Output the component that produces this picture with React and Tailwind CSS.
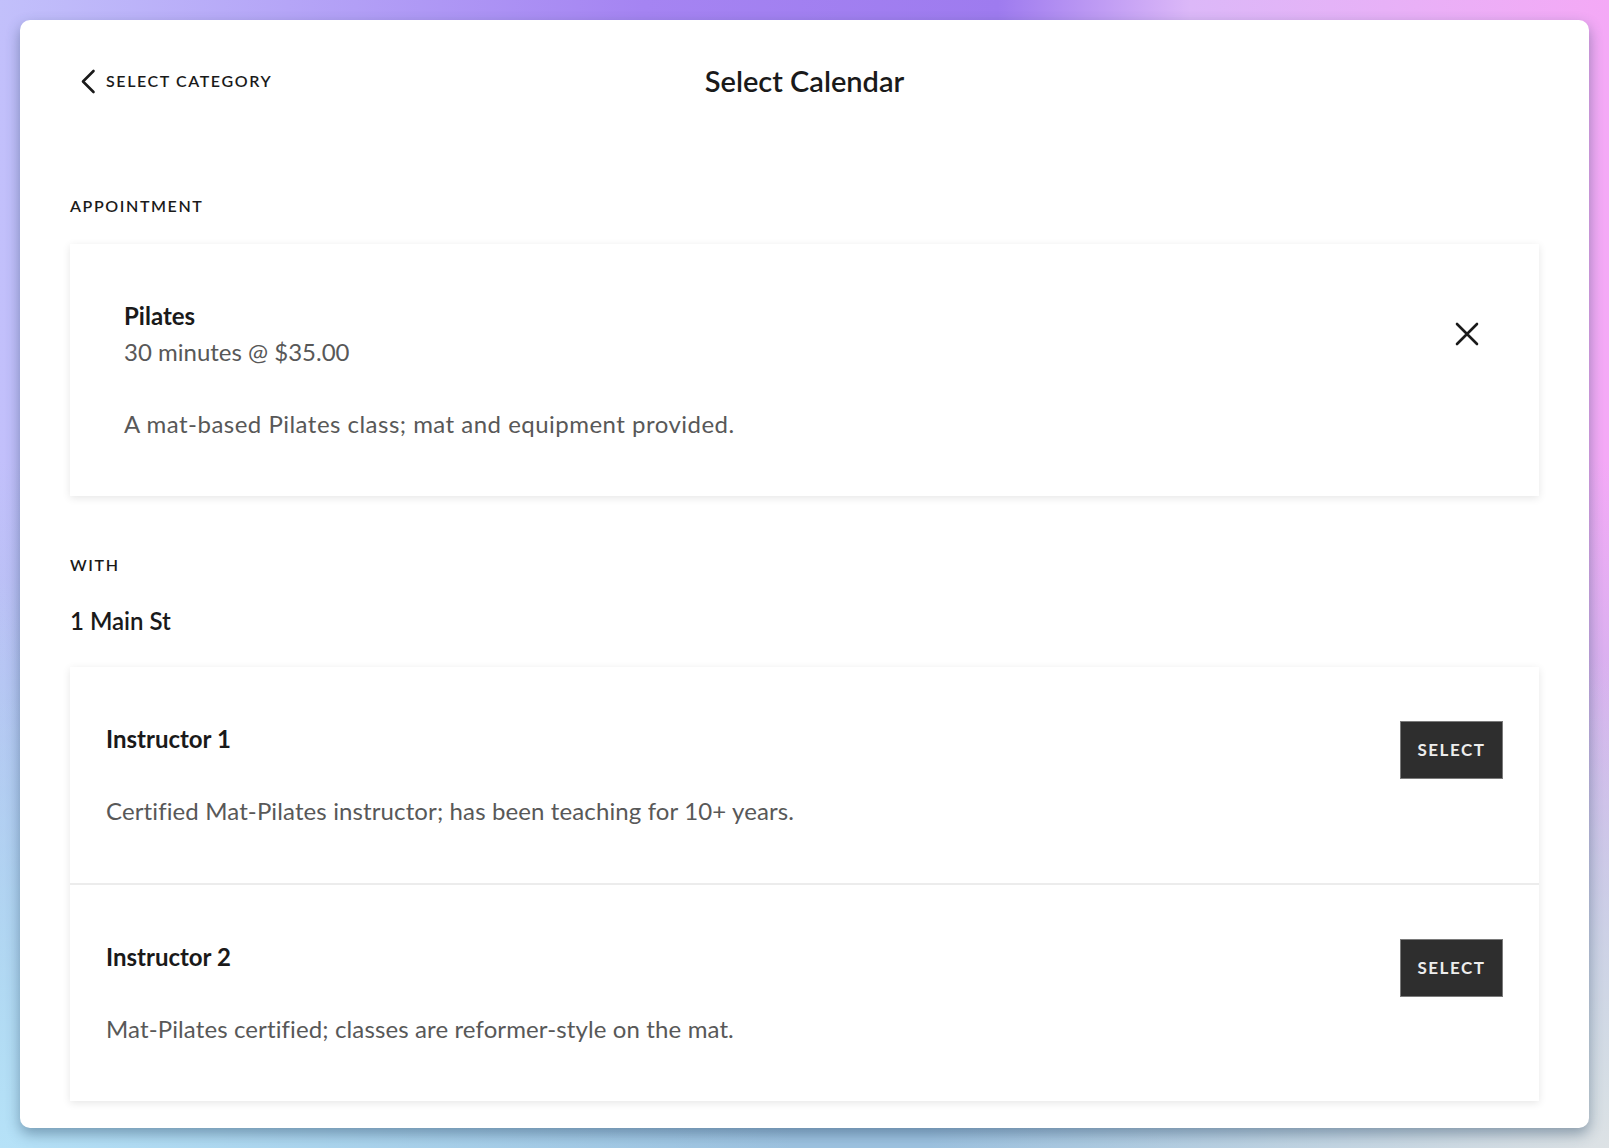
const instructors = [
  {
    name: 'Instructor 1',
    description: 'Certified Mat-Pilates instructor; has been teaching for 10+ years.',
  },
  {
    name: 'Instructor 2',
    description: 'Mat-Pilates certified; classes are reformer-style on the mat.',
  },
];

function ChevronLeft() {
  return (
    <svg width="16" height="25" viewBox="0 0 16 25" fill="none">
      <polyline
        points="13.5,2 3,12.5 13.5,23"
        stroke="#1a1a1a"
        strokeWidth="2.6"
        strokeLinecap="round"
        strokeLinejoin="round"
      />
    </svg>
  );
}

function CloseIcon() {
  return (
    <svg width="24" height="24" viewBox="0 0 24 24" fill="none">
      <path d="M2 2 L22 22 M22 2 L2 22" stroke="#1a1a1a" strokeWidth="2.6" strokeLinecap="round" />
    </svg>
  );
}

function InstructorRow({ instructor, last }) {
  return (
    <div
      className={
        last
          ? 'flex items-start justify-between px-[36px] py-[54px]'
          : 'flex items-start justify-between px-[36px] py-[54px] border-b-2 border-[#ececec]'
      }
    >
      <div>
        <h3 className="text-[24px] leading-[36px] font-bold text-[#1a1a1a]">{instructor.name}</h3>
        <p className="mt-[36px] text-[24px] leading-[36px] tracking-[0.005em] text-[#585858]">
          {instructor.description}
        </p>
      </div>
      <button className="h-[58px] w-[103px] bg-[#2e2e2e] border border-[#7a7a7a] text-[#ededed] text-[17px] font-bold tracking-[0.09em]">
        SELECT
      </button>
    </div>
  );
}

export default function App() {
  return (
    <div
      className="min-h-screen p-[20px] font-['Lato','Liberation_Sans',sans-serif] bg-[radial-gradient(ellipse_at_100%_100%,#dde2e5_0%,transparent_30%),radial-gradient(ellipse_at_0%_100%,#b6e2f8_0%,transparent_35%),linear-gradient(180deg,transparent_40%,#9dc3e0_100%),linear-gradient(90deg,#c2c0fb_0%,#a584f2_40%,#9e7bef_62%,#dcb8f8_74%,#f4a9f6_100%)]"
    >
      <div className="bg-white rounded-[10px] shadow-[0_6px_14px_rgba(40,70,100,0.45)] px-[50px] pt-[26px] pb-[27px]">
        {/* header */}
        <div className="grid grid-cols-[1fr_auto_1fr] items-center h-[70px]">
          <button className="flex items-center gap-[10px] ml-[10px] justify-self-start">
            <ChevronLeft />
            <span className="text-[16px] font-semibold tracking-[0.1em] text-[#1a1a1a]">SELECT CATEGORY</span>
          </button>
          <h1 className="text-[29px] font-semibold text-[#1a1a1a]">Select Calendar</h1>
          <div />
        </div>

        {/* appointment */}
        <h2 className="mt-[80px] text-[16px] leading-[20px] font-semibold tracking-[0.1em] text-[#1a1a1a]">
          APPOINTMENT
        </h2>
        <div className="mt-[28px] bg-white shadow-[0_2px_8px_rgba(0,0,0,0.1)] p-[54px]">
          <div className="flex items-center justify-between pr-[6px]">
            <div>
              <h3 className="text-[24px] leading-[36px] font-bold text-[#1a1a1a]">Pilates</h3>
              <p className="text-[24px] leading-[36px] text-[#585858]">30 minutes @ $35.00</p>
            </div>
            <button>
              <CloseIcon />
            </button>
          </div>
          <p className="mt-[36px] text-[24px] leading-[36px] tracking-[0.02em] text-[#585858]">
            A mat-based Pilates class; mat and equipment provided.
          </p>
        </div>

        {/* with */}
        <h2 className="mt-[59px] text-[16px] leading-[20px] font-semibold tracking-[0.1em] text-[#1a1a1a]">WITH</h2>
        <p className="mt-[31px] text-[24px] leading-[30px] font-semibold text-[#1a1a1a]">1 Main St</p>
        <div className="mt-[31px] bg-white shadow-[0_2px_8px_rgba(0,0,0,0.1)]">
          {instructors.map((instructor, i) => (
            <InstructorRow key={instructor.name} instructor={instructor} last={i === instructors.length - 1} />
          ))}
        </div>
      </div>
    </div>
  );
}
